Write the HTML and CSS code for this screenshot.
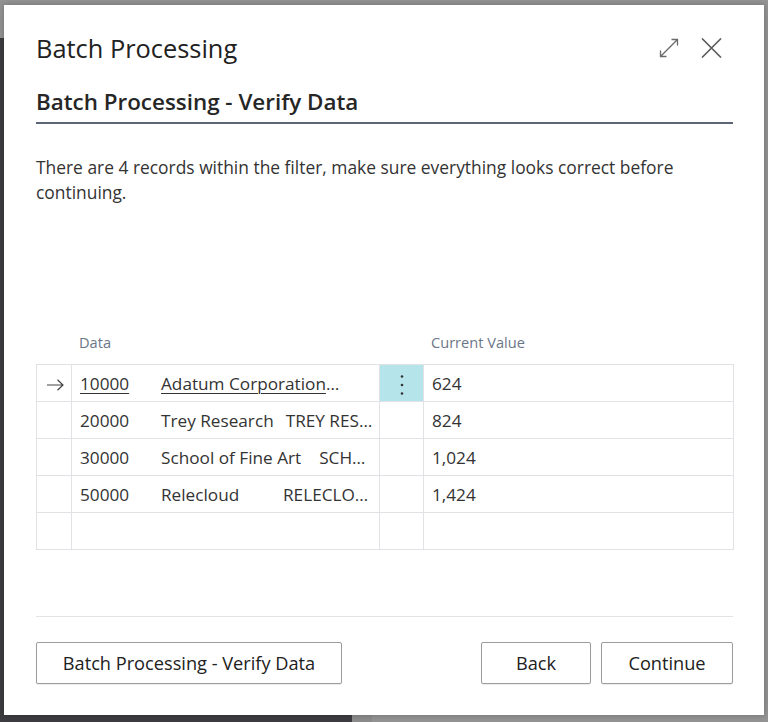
FILE: index.html
```html
<!DOCTYPE html>
<html lang="en">
<head>
<meta charset="utf-8">
<title>Batch Processing</title>
<link rel="stylesheet" href="styles.css">
</head>
<body>
<div class="backdrop">
  <div class="dialog">
    <div class="dlg-head">
      <h1 class="dlg-title">Batch Processing</h1>
      <div class="dlg-tools">
        <svg class="ico-expand" width="20" height="20" viewBox="0 0 20 20" aria-hidden="true">
          <path d="M1.5 18.5 L18.5 1.5 M12.5 1.5 H18.5 V7.5 M1.5 12.5 V18.5 H7.5" fill="none" stroke="#6a6a6a" stroke-width="1.3"/>
        </svg>
        <svg class="ico-close" width="21" height="20" viewBox="0 0 21 20" aria-hidden="true">
          <path d="M1 0.5 L20 19.5 M20 0.5 L1 19.5" fill="none" stroke="#5a5a5a" stroke-width="1.6"/>
        </svg>
      </div>
    </div>
    <h2 class="dlg-sub">Batch Processing - Verify Data</h2>
    <p class="dlg-text">There are 4 records within the filter, make sure everything looks correct before continuing.</p>

    <div class="grid-head">
      <span class="gh-data">Data</span>
      <span class="gh-value">Current Value</span>
    </div>
    <table class="grid">
      <colgroup>
        <col class="c-ind"><col class="c-data"><col class="c-menu"><col class="c-val">
      </colgroup>
      <tr class="sel">
        <td class="ind">
          <svg width="17" height="12" viewBox="0 0 17 12" aria-hidden="true"><path d="M0 6 H16 M10.5 0.8 L16 6 L10.5 11.2" fill="none" stroke="#444" stroke-width="1.2"/></svg>
        </td>
        <td class="data"><span class="no link">10000</span><span class="name"><span class="link">Adatum Corporation</span>…</span></td>
        <td class="menu">
          <svg width="4" height="20" viewBox="0 0 4 20" aria-hidden="true"><circle cx="2" cy="1.5" r="1.3" fill="#333"/><circle cx="2" cy="10" r="1.3" fill="#333"/><circle cx="2" cy="18.5" r="1.3" fill="#333"/></svg>
        </td>
        <td class="val">624</td>
      </tr>
      <tr>
        <td class="ind"></td>
        <td class="data"><span class="no">20000</span><span class="name">Trey Research</span><span class="code">TREY RES…</span></td>
        <td class="menu"></td>
        <td class="val">824</td>
      </tr>
      <tr>
        <td class="ind"></td>
        <td class="data"><span class="no">30000</span><span class="name">School of Fine Art</span><span class="code wide">SCH…</span></td>
        <td class="menu"></td>
        <td class="val">1,024</td>
      </tr>
      <tr>
        <td class="ind"></td>
        <td class="data"><span class="no">50000</span><span class="name">Relecloud</span><span class="code">RELECLO…</span></td>
        <td class="menu"></td>
        <td class="val">1,424</td>
      </tr>
      <tr>
        <td class="ind"></td>
        <td class="data"></td>
        <td class="menu"></td>
        <td class="val"></td>
      </tr>
    </table>

    <div class="dlg-sep"></div>
    <div class="dlg-actions">
      <button class="btn btn-wide">Batch Processing - Verify Data</button>
      <div class="spacer"></div>
      <button class="btn btn-back">Back</button>
      <button class="btn btn-continue">Continue</button>
    </div>
  </div>
</div>
</body>
</html>
```
FILE: styles.css
```css
* { box-sizing: border-box; }

html, body {
  margin: 0;
  padding: 0;
}

body {
  width: 768px;
  height: 722px;
  overflow: hidden;
  font-family: "Open Sans", "Noto Sans", sans-serif;
  color: #333;
  background:
    linear-gradient(#3c3c41, #3c3c41) 0 38px / 352px 100% no-repeat,
    linear-gradient(#8b8b8b, #8b8b8b) 352px 700px / 20px 22px no-repeat,
    #939393;
}

.backdrop {
  padding: 5px 4px;
}

.dialog {
  width: 760px;
  height: 710px;
  background: #fff;
  box-shadow: 0 0 6px rgba(0, 0, 0, 0.25);
  padding: 0 31px 0 32px;
  display: flex;
  flex-direction: column;
}

.dlg-head {
  display: flex;
  align-items: center;
  height: 34px;
  margin-top: 26px;
}

.dlg-title {
  margin: 0;
  font-size: 25.4px;
  font-weight: 400;
  line-height: 34px;
  color: #212121;
  flex: 1;
}

.dlg-tools {
  display: flex;
  align-items: center;
  gap: 22px;
  margin-right: 11px;
}

.ico-expand, .ico-close { display: block; }

.dlg-sub {
  margin: 22px 0 0;
  font-size: 22.4px;
  font-weight: 600;
  line-height: 30px;
  color: #262626;
  padding-bottom: 5px;
  border-bottom: 2px solid #5b6577;
}

.dlg-text {
  margin: 31px 0 0;
  font-size: 17.4px;
  line-height: 25px;
  color: #333;
}

.grid-head {
  margin-top: 127px;
  height: 20px;
  display: flex;
  font-size: 14.6px;
  line-height: 20px;
  color: #6b7688;
}

.gh-data { margin-left: 43px; width: 352px; }

.grid {
  margin-top: 12px;
  width: 697px;
  border-collapse: collapse;
  table-layout: fixed;
  font-size: 17.2px;
  color: #333;
}

.c-ind { width: 35px; }
.c-data { width: 308px; }
.c-menu { width: 44px; }
.c-val { width: 310px; }

.grid td {
  height: 37px;
  border: 1px solid #e1e1e6;
  padding: 0;
  vertical-align: middle;
  white-space: nowrap;
  overflow: hidden;
}

.grid td.ind { text-align: center; }
.grid td.ind svg { display: inline-block; vertical-align: middle; margin-left: 2px; }

.grid td.data { padding-left: 8px; }
.grid td.val { padding-left: 8px; }

.grid td.menu { text-align: center; }
.grid td.menu svg { display: inline-block; vertical-align: middle; margin-left: 1px; }
.grid tr.sel td.menu { background: #b5e5eb; }

.no { display: inline-block; width: 81px; }
.name { display: inline-block; min-width: 122px; padding-right: 12px; }
.code.wide { margin-left: 6px; }

.link {
  text-decoration: underline;
  text-underline-offset: 3px;
  text-decoration-thickness: 1px;
}

.dlg-sep {
  margin-top: 66px;
  height: 1px;
  background: #e3e3e3;
}

.dlg-actions {
  margin-top: 25px;
  display: flex;
  align-items: center;
  gap: 10px;
}

.spacer { flex: 1; }

.btn {
  height: 42px;
  border: 1px solid #9c9c9c;
  border-radius: 2px;
  background: #fff;
  font-family: "Open Sans", "Noto Sans", sans-serif;
  font-size: 18.2px;
  color: #212121;
  padding: 0;
  box-shadow: 0 1px 1px rgba(0, 0, 0, 0.08);
}

.btn-wide { width: 306px; }
.btn-back { width: 110px; }
.btn-continue { width: 132px; }
```
